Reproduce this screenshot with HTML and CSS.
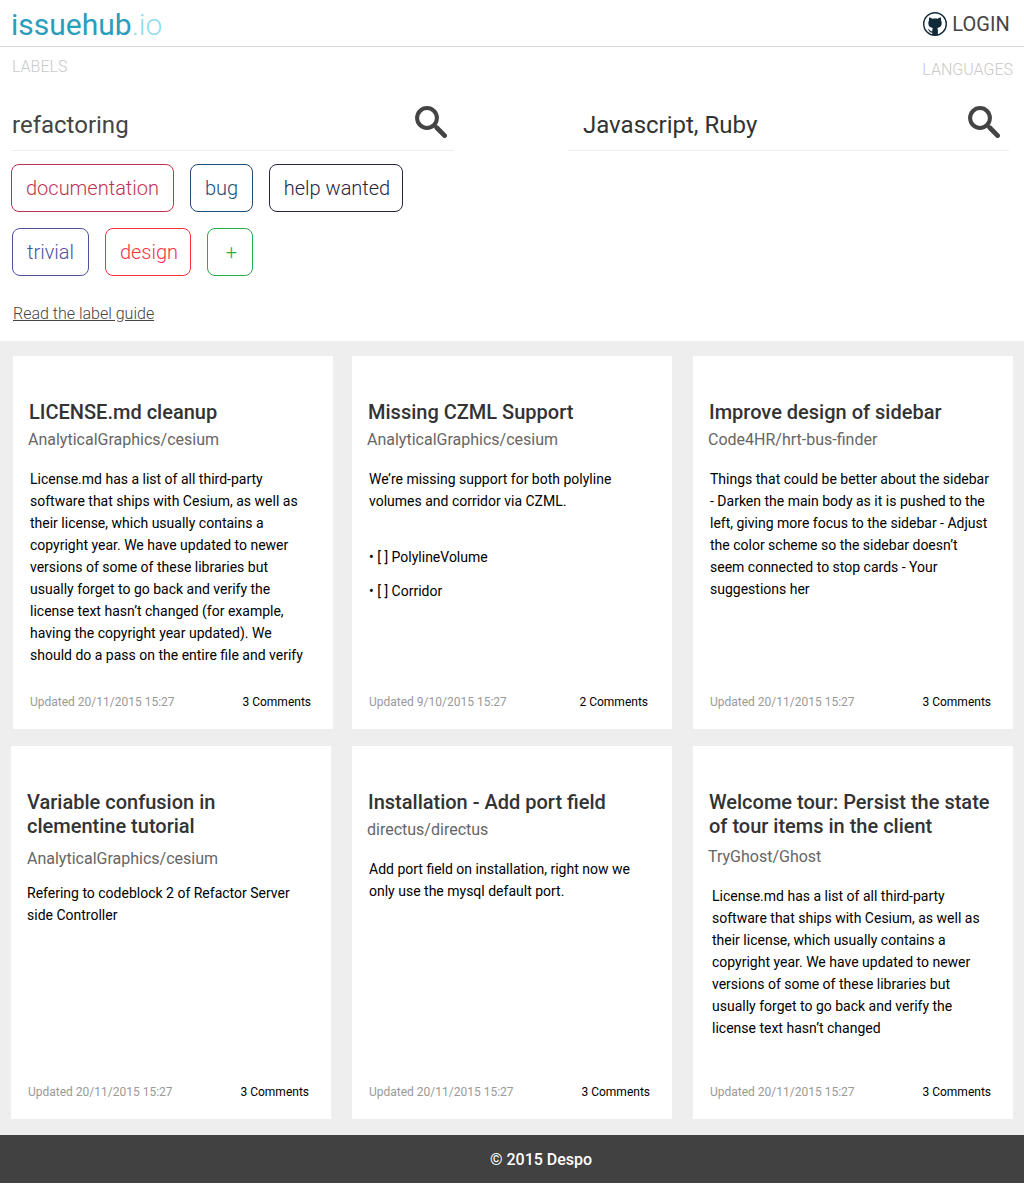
FILE: index.html
```html
<!DOCTYPE html>
<html lang="en">
<head>
<meta charset="utf-8">
<title>issuehub.io</title>
<link rel="stylesheet" href="styles.css">
</head>
<body>
<svg class="sprite" width="0" height="0">
  <symbol id="search" viewBox="0 0 32 32">
    <circle cx="12" cy="12" r="9.9" fill="none" stroke="currentColor" stroke-width="4"/>
    <path d="M19 19L21.5 21.5" stroke="currentColor" stroke-width="3"/>
    <path d="M21.8 21.8L29.6 29.6" stroke="currentColor" stroke-width="4.8" stroke-linecap="round"/>
  </symbol>
</svg>
<header class="header">
  <a class="logo">issuehub<span class="logo-tld">.io</span></a>
  <a class="login">
    <svg class="login-icon" viewBox="0 0 24 24">
      <circle cx="12" cy="12" r="11.3" fill="#fff" stroke="#102a3a" stroke-width="1.4"/>
      <path fill="#102a3a" d="M6.2 5.5C7.4 5.5 8.6 6.2 9.3 6.7C11 6.3 13 6.3 14.7 6.7C15.4 6.2 16.6 5.5 17.8 5.5C18.2 6.5 18.2 7.5 17.9 8.3C18.6 9.2 18.8 10.2 18.7 11.4C18.5 14.4 16.7 15.5 14.2 15.9C14.8 16.6 14.9 17.2 14.9 18V23.2H9.2V20.6C6.8 20.9 6.5 19.6 5.9 18.6C5.5 18 5 17.8 4.6 17.4C6 17 6.8 17.9 7.4 18.7C7.9 19.3 8.5 19.5 9.3 19.2V18C9.3 17.2 9.4 16.5 9.9 15.9C7.3 15.5 5.5 14.4 5.3 11.4C5.2 10.2 5.5 9.2 6.1 8.3C5.8 7.5 5.8 6.5 6.2 5.5Z"/>
    </svg>
    LOGIN
  </a>
</header>
<section class="filters">
  <div class="filter filter-labels">
    <div class="caption">LABELS</div>
    <div class="search"><span>refactoring</span><svg class="search-icon"><use href="#search"/></svg></div>
    <div class="tags">
      <span class="tag documentation">documentation</span>
      <span class="tag bug">bug</span>
      <span class="tag help">help wanted</span>
    </div>
    <div class="tags second">
      <span class="tag trivial">trivial</span>
      <span class="tag design">design</span>
      <span class="tag add">+</span>
    </div>
    <a class="guide">Read the label guide</a>
  </div>
  <div class="filter filter-languages">
    <div class="caption">LANGUAGES</div>
    <div class="search"><span>Javascript, Ruby</span><svg class="search-icon"><use href="#search"/></svg></div>
  </div>
</section>
<main class="issues">
  <div class="row first">
    <article class="card">
      <h2>LICENSE.md cleanup</h2>
      <div class="repo">AnalyticalGraphics/cesium</div>
      <p>License.md has a list of all third-party<br>software that ships with Cesium, as well as<br>their license, which usually contains a<br>copyright year. We have updated to newer<br>versions of some of these libraries but<br>usually forget to go back and verify the<br>license text hasn’t changed (for example,<br>having the copyright year updated). We<br>should do a pass on the entire file and verify</p>
      <footer><time>Updated 20/11/2015 15:27</time><span>3 Comments</span></footer>
    </article>
    <article class="card">
      <h2>Missing CZML Support</h2>
      <div class="repo">AnalyticalGraphics/cesium</div>
      <p>We’re missing support for both polyline<br>volumes and corridor via CZML.</p>
      <ul><li>• [ ] PolylineVolume</li><li>• [ ] Corridor</li></ul>
      <footer class="short"><time>Updated 9/10/2015 15:27</time><span>2 Comments</span></footer>
    </article>
    <article class="card">
      <h2>Improve design of sidebar</h2>
      <div class="repo">Code4HR/hrt-bus-finder</div>
      <p>Things that could be better about the sidebar<br>- Darken the main body as it is pushed to the<br>left, giving more focus to the sidebar - Adjust<br>the color scheme so the sidebar doesn’t<br>seem connected to stop cards - Your<br>suggestions her</p>
      <footer><time>Updated 20/11/2015 15:27</time><span>3 Comments</span></footer>
    </article>
  </div>
  <div class="row">
    <article class="card compact">
      <h2>Variable confusion in<br>clementine tutorial</h2>
      <div class="repo">AnalyticalGraphics/cesium</div>
      <p>Refering to codeblock 2 of Refactor Server<br>side Controller</p>
      <footer><time>Updated 20/11/2015 15:27</time><span>3 Comments</span></footer>
    </article>
    <article class="card">
      <h2>Installation - Add port field</h2>
      <div class="repo">directus/directus</div>
      <p>Add port field on installation, right now we<br>only use the mysql default port.</p>
      <footer><time>Updated 20/11/2015 15:27</time><span>3 Comments</span></footer>
    </article>
    <article class="card tour">
      <h2>Welcome tour: Persist the state<br>of tour items in the client</h2>
      <div class="repo">TryGhost/Ghost</div>
      <p>License.md has a list of all third-party<br>software that ships with Cesium, as well as<br>their license, which usually contains a<br>copyright year. We have updated to newer<br>versions of some of these libraries but<br>usually forget to go back and verify the<br>license text hasn’t changed</p>
      <footer><time>Updated 20/11/2015 15:27</time><span>3 Comments</span></footer>
    </article>
  </div>
</main>
<footer class="page-footer">© 2015 Despo</footer>
</body>
</html>
```
FILE: styles.css
```css
* { box-sizing: border-box; }
body { margin: 0; background: #fff; color: #000; font-family: Roboto, sans-serif; white-space: nowrap; }
.sprite { display: block; }
.header { height: 47px; padding: 0 14px 0 11px; display: flex; justify-content: space-between; border-bottom: 1px solid #d8d8d8; }
.logo { font-size: 30px; line-height: 50px; height: 46px; color: #2b9dbd; }
.logo-tld { font-weight: 300; color: #93dcf0; }
.login { display: flex; align-items: center; gap: 5px; height: 47px; font-size: 20px; letter-spacing: 0.1px; color: #444; }
.login-icon { width: 24px; height: 24px; }
.filters { height: 294px; display: flex; justify-content: space-between; padding: 0 11px; }
.filter { display: flex; flex-direction: column; }
.filter-labels { width: 443px; }
.filter-languages { width: 445px; }
.caption { height: 40px; padding: 10px 1px 0; font-size: 16px; line-height: 20px; font-weight: 300; color: #c9c9c9; }
.filter-languages .caption { padding: 13px 0 0; text-align: right; }
.search { height: 64px; padding: 16px 7px 0 1px; display: flex; justify-content: space-between; border-bottom: 1px solid #eee; font-size: 24px; line-height: 45px; color: #444; }
.filter-languages .search { margin-right: 4px; padding: 16px 9px 0 15px; color: #333; }
.search-icon { width: 32px; height: 32px; margin-top: 3px; color: #444; }
.tags { display: flex; gap: 16px; margin-top: 13px; }
.tags.second { margin: 16px 0 0 1px; }
.tag { height: 48px; border: 1px solid; border-radius: 8px; font-size: 20px; line-height: 46px; font-weight: 300; text-align: center; }
.documentation { width: 163px; color: #c0334f; }
.bug { width: 63px; color: #1f4b75; }
.help { width: 134px; padding-left: 2px; color: #262640; }
.trivial { width: 77px; color: #4e529c; }
.design { width: 86px; padding-left: 2px; color: #f7323f; }
.add { width: 46px; padding-left: 3px; color: #24ae4a; }
.guide { margin: 28px 0 0 2px; font-size: 16px; line-height: 20px; font-weight: 300; color: #444; text-decoration: underline; }
.issues { height: 794px; padding: 15px 11px 16px; background: #eee; display: flex; flex-direction: column; gap: 17px; }
.row { display: grid; grid-template-columns: repeat(3, 320px); column-gap: 21px; }
.row.first .card:first-child { margin: 0 -2px 0 2px; }
.card { height: 373px; padding: 44px 0 17px 15px; background: #fff; display: flex; flex-direction: column; }
.card h2 { margin: 0 0 0 1px; font-size: 20px; line-height: 24px; font-weight: 500; color: #333; }
.repo { margin-top: 6px; font-size: 16px; line-height: 20px; color: #666; }
.card p { margin: 18px 0 0 2px; font-size: 14px; line-height: 22px; }
.card ul { margin: 34px 0 0 2px; padding: 0; list-style: none; font-size: 14px; line-height: 22px; }
.card li + li { margin-top: 12px; }
.compact .repo { margin: 11px 0 0 1px; }
.compact p { margin: 13px 0 0 1px; }
.tour .repo { margin-top: 9px; }
.tour p { margin: 18px 0 0 4px; }
.card footer { margin-top: auto; padding: 0 22px 0 2px; display: flex; justify-content: space-between; font-size: 12px; line-height: 20px; }
.card footer.short { padding-right: 24px; }
.card time { color: #999; }
.page-footer { height: 48px; padding-left: 58px; background: #414141; color: #fff; font-size: 16px; line-height: 49px; font-weight: 500; text-align: center; }
```
